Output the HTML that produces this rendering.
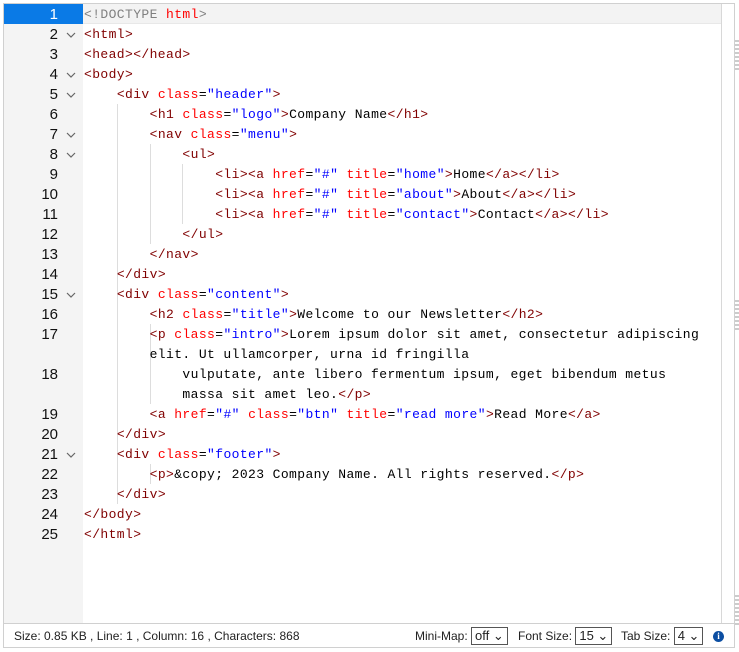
<!DOCTYPE html>
<html><head><style>
body{margin:0;width:739px;height:652px;background:#fff;position:relative;overflow:hidden;font-family:"Liberation Sans",sans-serif}
.ed{position:absolute;left:3px;top:3px;width:732px;height:645px;border:1px solid #d0d0d0;box-sizing:border-box}
.gut{position:absolute;left:4px;top:4px;width:79px;height:619px;background:#f4f4f4}
.active{position:absolute;left:4px;top:4px;width:79px;height:20px;background:#0a7ae6}
.aline{position:absolute;left:83px;top:4px;width:638px;height:20px;background:#f3f3f3;border-bottom:1px solid #e8e8e8;box-sizing:border-box}
.vs{position:absolute;left:721px;top:4px;width:1px;height:619px;background:#d8d8d8}
.num{position:absolute;left:4px;width:54px;text-align:right;font:15px "Liberation Sans",sans-serif;color:#111;line-height:20px;margin-top:1px}
.num.a{color:#fff}
.code{position:absolute;left:84px;font:13px "Liberation Mono",monospace;letter-spacing:0.4px;line-height:20px;white-space:pre;color:#000;margin-top:1px}
.t{color:#800000}.at{color:#f00}.v{color:#00f}.d{color:#808080}
.g{position:absolute;width:1px;background:#ddd}
.sb{position:absolute;left:4px;top:623px;width:730px;height:24px;border-top:1px solid #d0d0d0;font-size:12px;color:#222;line-height:24px}
.sel{display:inline-block;border:1px solid #555;height:16px;line-height:16px;padding:0 3px;font-size:13px;vertical-align:middle;margin-top:-2px}
</style></head><body>
<div class="ed"></div>
<div class="gut"></div>
<div class="aline"></div>
<div class="active"></div>
<div class="vs"></div>
<div style="position:absolute;left:735px;top:40px;width:4px;height:30px;background:repeating-linear-gradient(#ccc 0 2px,#fff 2px 4px)"></div>
<div style="position:absolute;left:735px;top:300px;width:4px;height:30px;background:repeating-linear-gradient(#ccc 0 2px,#fff 2px 4px)"></div>
<div style="position:absolute;left:735px;top:595px;width:4px;height:30px;background:repeating-linear-gradient(#ccc 0 2px,#fff 2px 4px)"></div>
<div class="g" style="left:117px;top:104px;height:400px"></div>
<div class="g" style="left:150px;top:144px;height:100px"></div>
<div class="g" style="left:182px;top:164px;height:60px"></div>
<div class="g" style="left:150px;top:324px;height:80px"></div>
<div class="g" style="left:150px;top:464px;height:20px"></div>
<div class="num a" style="top:4px">1</div>
<div class="num" style="top:24px">2</div>
<div class="num" style="top:44px">3</div>
<div class="num" style="top:64px">4</div>
<div class="num" style="top:84px">5</div>
<div class="num" style="top:104px">6</div>
<div class="num" style="top:124px">7</div>
<div class="num" style="top:144px">8</div>
<div class="num" style="top:164px">9</div>
<div class="num" style="top:184px">10</div>
<div class="num" style="top:204px">11</div>
<div class="num" style="top:224px">12</div>
<div class="num" style="top:244px">13</div>
<div class="num" style="top:264px">14</div>
<div class="num" style="top:284px">15</div>
<div class="num" style="top:304px">16</div>
<div class="num" style="top:324px">17</div>
<div class="num" style="top:364px">18</div>
<div class="num" style="top:404px">19</div>
<div class="num" style="top:424px">20</div>
<div class="num" style="top:444px">21</div>
<div class="num" style="top:464px">22</div>
<div class="num" style="top:484px">23</div>
<div class="num" style="top:504px">24</div>
<div class="num" style="top:524px">25</div>
<svg style="position:absolute;left:0;top:0" width="90" height="470">
<g fill="none" stroke="#666" stroke-width="1.2">
<path d="M67 33l4 4 4-4"/><path d="M67 73l4 4 4-4"/><path d="M67 93l4 4 4-4"/><path d="M67 133l4 4 4-4"/><path d="M67 153l4 4 4-4"/><path d="M67 293l4 4 4-4"/><path d="M67 453l4 4 4-4"/>
</g></svg>
<div class="code" style="top:4px"><span class="d">&lt;!DOCTYPE </span><span class="at">html</span><span class="d">&gt;</span></div>
<div class="code" style="top:24px"><span class="t">&lt;html&gt;</span></div>
<div class="code" style="top:44px"><span class="t">&lt;head&gt;&lt;/head&gt;</span></div>
<div class="code" style="top:64px"><span class="t">&lt;body&gt;</span></div>
<div class="code" style="top:84px">    <span class="t">&lt;div </span><span class="at">class</span>=<span class="v">"header"</span><span class="t">&gt;</span></div>
<div class="code" style="top:104px">        <span class="t">&lt;h1 </span><span class="at">class</span>=<span class="v">"logo"</span><span class="t">&gt;</span>Company Name<span class="t">&lt;/h1&gt;</span></div>
<div class="code" style="top:124px">        <span class="t">&lt;nav </span><span class="at">class</span>=<span class="v">"menu"</span><span class="t">&gt;</span></div>
<div class="code" style="top:144px">            <span class="t">&lt;ul&gt;</span></div>
<div class="code" style="top:164px">                <span class="t">&lt;li&gt;&lt;a </span><span class="at">href</span>=<span class="v">"#"</span> <span class="at">title</span>=<span class="v">"home"</span><span class="t">&gt;</span>Home<span class="t">&lt;/a&gt;&lt;/li&gt;</span></div>
<div class="code" style="top:184px">                <span class="t">&lt;li&gt;&lt;a </span><span class="at">href</span>=<span class="v">"#"</span> <span class="at">title</span>=<span class="v">"about"</span><span class="t">&gt;</span>About<span class="t">&lt;/a&gt;&lt;/li&gt;</span></div>
<div class="code" style="top:204px">                <span class="t">&lt;li&gt;&lt;a </span><span class="at">href</span>=<span class="v">"#"</span> <span class="at">title</span>=<span class="v">"contact"</span><span class="t">&gt;</span>Contact<span class="t">&lt;/a&gt;&lt;/li&gt;</span></div>
<div class="code" style="top:224px">            <span class="t">&lt;/ul&gt;</span></div>
<div class="code" style="top:244px">        <span class="t">&lt;/nav&gt;</span></div>
<div class="code" style="top:264px">    <span class="t">&lt;/div&gt;</span></div>
<div class="code" style="top:284px">    <span class="t">&lt;div </span><span class="at">class</span>=<span class="v">"content"</span><span class="t">&gt;</span></div>
<div class="code" style="top:304px">        <span class="t">&lt;h2 </span><span class="at">class</span>=<span class="v">"title"</span><span class="t">&gt;</span>Welcome to our Newsletter<span class="t">&lt;/h2&gt;</span></div>
<div class="code" style="top:324px">        <span class="t">&lt;p </span><span class="at">class</span>=<span class="v">"intro"</span><span class="t">&gt;</span>Lorem ipsum dolor sit amet, consectetur adipiscing</div>
<div class="code" style="top:344px">        elit. Ut ullamcorper, urna id fringilla</div>
<div class="code" style="top:364px">            vulputate, ante libero fermentum ipsum, eget bibendum metus</div>
<div class="code" style="top:384px">            massa sit amet leo.<span class="t">&lt;/p&gt;</span></div>
<div class="code" style="top:404px">        <span class="t">&lt;a </span><span class="at">href</span>=<span class="v">"#"</span> <span class="at">class</span>=<span class="v">"btn"</span> <span class="at">title</span>=<span class="v">"read more"</span><span class="t">&gt;</span>Read More<span class="t">&lt;/a&gt;</span></div>
<div class="code" style="top:424px">    <span class="t">&lt;/div&gt;</span></div>
<div class="code" style="top:444px">    <span class="t">&lt;div </span><span class="at">class</span>=<span class="v">"footer"</span><span class="t">&gt;</span></div>
<div class="code" style="top:464px">        <span class="t">&lt;p&gt;</span>&amp;copy; 2023 Company Name. All rights reserved.<span class="t">&lt;/p&gt;</span></div>
<div class="code" style="top:484px">    <span class="t">&lt;/div&gt;</span></div>
<div class="code" style="top:504px"><span class="t">&lt;/body&gt;</span></div>
<div class="code" style="top:524px"><span class="t">&lt;/html&gt;</span></div>
<div class="sb">
<span style="position:absolute;left:10px">Size: 0.85 KB , Line: 1 , Column: 16 , Characters: 868</span>
<span style="position:absolute;left:411px">Mini-Map: <span class="sel">off &#x2304;</span></span>
<span style="position:absolute;left:514px">Font Size: <span class="sel">15 &#x2304;</span></span>
<span style="position:absolute;left:617px">Tab Size: <span class="sel">4 &#x2304;</span></span>
<span style="position:absolute;left:709px;top:7px;width:11px;height:11px;border-radius:50%;background:#0b4ea2;color:#fff;font:bold 9px/11px 'Liberation Serif',serif;text-align:center">i</span>
</div>
</body></html>
